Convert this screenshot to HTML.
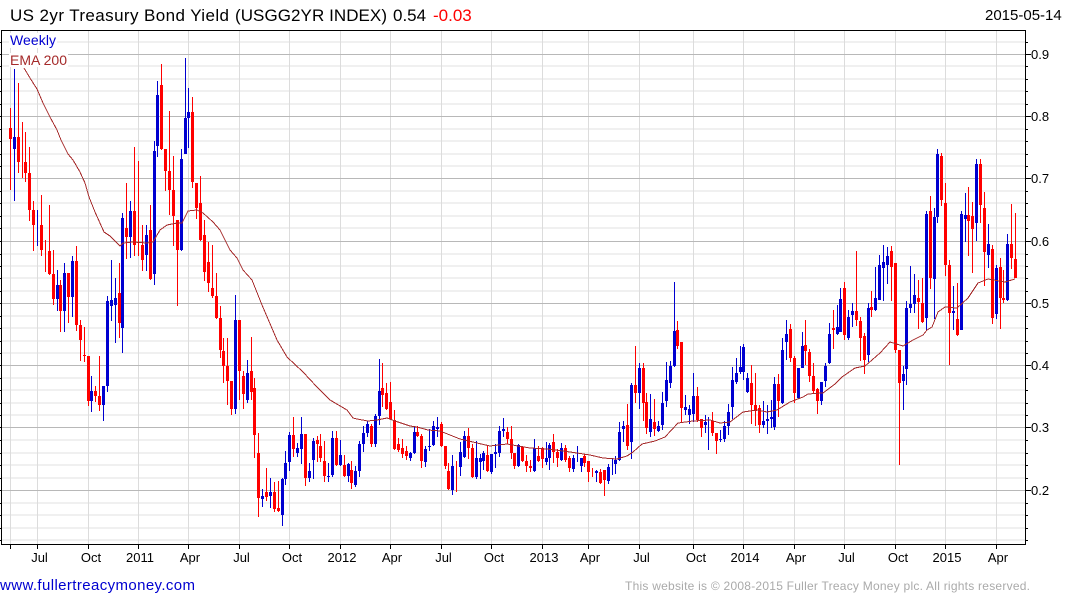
<!DOCTYPE html>
<html><head><meta charset="utf-8"><title>US 2yr Treasury Bond Yield</title>
<style>
html,body{margin:0;padding:0;background:#fff;width:1075px;height:600px;overflow:hidden}
svg{display:block}
text{font-family:"Liberation Sans",Arial,sans-serif}
</style></head><body>
<svg width="1075" height="600" viewBox="0 0 1075 600" xmlns="http://www.w3.org/2000/svg">
<rect width="1075" height="600" fill="#fff"/>
<g shape-rendering="crispEdges" fill="none">
<path stroke="#f0f0f0" stroke-width="2" d="M2 42H1025M2 66H1025M2 79H1025M2 91H1025M2 104H1025M2 129H1025M2 141H1025M2 154H1025M2 166H1025M2 191H1025M2 203H1025M2 216H1025M2 228H1025M2 254H1025M2 266H1025M2 278H1025M2 291H1025M2 316H1025M2 328H1025M2 341H1025M2 353H1025M2 378H1025M2 390H1025M2 403H1025M2 415H1025M2 440H1025M2 453H1025M2 465H1025M2 478H1025M2 503H1025M2 515H1025M2 528H1025M2 540H1025"/>
<path stroke="#dcdcdc" d="M10.5 31V544M37.5 31V544M88.5 31V544M138.5 31V544M188.5 31V544M239.5 31V544M289.5 31V544M340.5 31V544M390.5 31V544M441.5 31V544M491.5 31V544M542.5 31V544M588.5 31V544M639.5 31V544M693.5 31V544M743.5 31V544M794.5 31V544M844.5 31V544M895.5 31V544M945.5 31V544M996.5 31V544"/>
<path stroke="#b8b8b8" d="M2 54.5H1025M2 116.5H1025M2 178.5H1025M2 241.5H1025M2 303.5H1025M2 365.5H1025M2 427.5H1025M2 490.5H1025"/>
<!-- red wicks -->
<path stroke="#ff0000" d="M10.5 108V190M18.5 83V173M22.5 122V178M25.5 132V182M29.5 147V221M33.5 201V251M41.5 195V256M45.5 240V272M49.5 205V275M53.5 250V305M60.5 280V332M68.5 273V323M76.5 246V331M80.5 320V361M84.5 327V362M88.5 356V406M95.5 386V402M99.5 356V411M119.5 263V338M126.5 183V259M134.5 147V256M138.5 161V256M142.5 225V271M150.5 205V280M161.5 64V150M165.5 149V191M169.5 111V215M173.5 156V246M177.5 220V306M192.5 97V188M196.5 183V219M200.5 176V241M204.5 220V281M208.5 242V292M212.5 245V298M216.5 273V319M220.5 306V358M223.5 338V383M227.5 338V405M231.5 381V415M239.5 320V400M243.5 371V409M251.5 337V400M254.5 378V458M258.5 433V517M266.5 468V501M274.5 482V512M278.5 481V512M293.5 417V457M305.5 434V486M317.5 436V462M320.5 434V462M324.5 441V482M336.5 431V466M344.5 455V477M351.5 461V489M371.5 424V447M382.5 363V407M386.5 383V410M390.5 382V419M394.5 410V450M398.5 438V452M402.5 439V458M406.5 446V460M417.5 426V437M421.5 434V468M441.5 422V447M445.5 446V469M448.5 463V490M456.5 461V492M468.5 428V459M472.5 444V478M487.5 446V472M507.5 427V444M511.5 426V459M514.5 453V469M522.5 446V462M526.5 455V472M530.5 460V472M538.5 446V462M542.5 447V468M553.5 434V463M557.5 449V467M565.5 445V462M569.5 456V472M584.5 454V467M588.5 461V482M592.5 468V477M600.5 469V484M604.5 470V496M627.5 404V450M635.5 346V403M643.5 363V421M646.5 393V434M654.5 399V436M677.5 321V349M681.5 342V423M697.5 387V422M701.5 419V437M712.5 412V436M716.5 433V454M751.5 365V424M755.5 373V426M759.5 405V433M778.5 374V417M790.5 324V362M794.5 356V403M805.5 320V365M809.5 349V382M813.5 363V393M817.5 388V414M833.5 310V349M844.5 282V340M856.5 251V326M860.5 317V361M864.5 333V374M871.5 291V317M891.5 246V301M895.5 263V353M899.5 350V465M918.5 280V329M922.5 278V323M930.5 196V289M941.5 153V206M945.5 183V276M949.5 260V365M957.5 283V336M968.5 187V256M972.5 202V273M980.5 159V223M984.5 192V286M992.5 245V324M1000.5 258V329M1003.5 270V303M1011.5 204V269M1015.5 213V278"/>
<!-- blue wicks -->
<path stroke="#0000d0" d="M14.5 69V201M37.5 210V246M57.5 270V311M64.5 263V332M72.5 256V317M91.5 376V412M103.5 386V421M107.5 296V392M111.5 260V321M115.5 278V343M122.5 213V353M130.5 201V258M146.5 225V271M154.5 141V285M157.5 81V157M181.5 149V251M185.5 58V154M188.5 88V148M235.5 295V414M247.5 360V403M262.5 489V507M270.5 478V508M282.5 478V526M285.5 451V485M289.5 432V471M297.5 443V457M301.5 417V464M309.5 463V482M313.5 438V479M328.5 463V482M332.5 431V477M340.5 440V466M348.5 463V482M355.5 466V487M359.5 441V477M363.5 426V452M367.5 421V437M375.5 414V447M379.5 359V425M410.5 452V461M414.5 427V454M425.5 446V467M429.5 429V451M433.5 421V446M437.5 417V437M452.5 455V495M460.5 442V476M464.5 431V458M476.5 441V479M480.5 454V479M483.5 451V470M491.5 454V474M495.5 444V468M499.5 426V457M503.5 418V437M518.5 444V467M534.5 439V472M546.5 442V465M549.5 443V470M561.5 443V461M573.5 455V472M577.5 446V462M581.5 458V472M596.5 470V482M608.5 464V484M612.5 458V475M615.5 456V474M619.5 422V461M623.5 421V442M631.5 383V459M639.5 363V409M650.5 394V437M658.5 421V432M662.5 392V430M666.5 362V407M670.5 361V388M674.5 282V367M685.5 395V415M689.5 405V424M693.5 373V422M705.5 415V433M708.5 417V450M720.5 430V442M724.5 421V442M728.5 404V435M732.5 367V419M736.5 358V384M740.5 346V374M743.5 344V380M747.5 373V393M763.5 401V428M767.5 405V434M771.5 400V428M774.5 377V430M782.5 338V404M786.5 320V360M798.5 368V399M802.5 332V368M821.5 382V405M825.5 363V387M829.5 323V364M837.5 305V335M840.5 288V332M848.5 310V340M852.5 303V327M868.5 303V362M875.5 267V311M879.5 255V300M883.5 245V301M887.5 247V284M903.5 366V410M906.5 301V385M910.5 266V313M914.5 274V313M926.5 211V330M934.5 208V319M937.5 149V223M953.5 286V330M961.5 211V330M965.5 193V242M976.5 159V241M988.5 224V268M996.5 265V319M1007.5 234V301"/>
<!-- red bodies -->
<path stroke="#ff0000" stroke-width="3" d="M10.5 128V139M18.5 137V162M25.5 162V173M29.5 173V210M33.5 210V225M41.5 225V250M49.5 251V274M53.5 274V299M60.5 285V311M68.5 273V297M76.5 261V325M80.5 325V340M84.5 355V356M88.5 356V401M95.5 391V396M99.5 396V405M119.5 293V323M126.5 228V237M134.5 211V245M142.5 245V260M150.5 230V279M161.5 85V149M165.5 149V171M169.5 171V190M173.5 190V216M177.5 220V250M192.5 112V182M196.5 183V208M200.5 203V240M204.5 235V272M208.5 262V283M212.5 288V296M216.5 296V318M220.5 318V350M223.5 351V366M227.5 366V381M231.5 381V409M239.5 320V371M243.5 376V394M251.5 371V392M254.5 388V435M258.5 453V498M266.5 492V497M274.5 492V509M278.5 508V511M293.5 435V449M305.5 434V478M317.5 440V444M320.5 446V458M324.5 461V476M336.5 438V465M344.5 465V476M351.5 470V483M371.5 426V444M382.5 388V395M386.5 393V409M390.5 402V419M394.5 420V449M398.5 444V450M402.5 448V454M406.5 451V456M417.5 432V436M421.5 436V461M441.5 424V446M445.5 446V466M448.5 471V489M468.5 436V448M472.5 448V477M487.5 455V471M507.5 432V439M511.5 439V453M514.5 453V466M522.5 447V461M526.5 461V466M530.5 466V468M538.5 456V461M542.5 448V459M553.5 442V452M557.5 452V458M565.5 448V460M569.5 458V468M584.5 456V463M588.5 461V472M600.5 472V483M604.5 470V480M627.5 425V446M635.5 385V393M643.5 368V403M646.5 402V428M654.5 422V429M677.5 330V346M681.5 342V408M697.5 396V420M701.5 419V428M712.5 421V433M716.5 433V441M751.5 383V405M755.5 405V411M759.5 408V425M778.5 384V401M790.5 329V358M794.5 358V393M805.5 345V351M809.5 352V376M813.5 376V391M817.5 389V401M833.5 328V330M844.5 288V335M856.5 311V320M860.5 321V338M864.5 336V360M871.5 307V310M891.5 251V267M895.5 263V350M899.5 350V383M918.5 298V302M922.5 303V322M930.5 211V278M941.5 156V200M945.5 203V265M949.5 265V313M957.5 319V335M968.5 215V221M972.5 216V229M980.5 164V205M984.5 208V252M992.5 249V318M1000.5 267V298M1003.5 298V300M1011.5 244V258M1015.5 259V278"/>
<!-- blue bodies -->
<path stroke="#0000d0" stroke-width="3" d="M14.5 137V149M57.5 285V299M64.5 273V311M72.5 261V297M91.5 391V401M103.5 386V405M107.5 301V386M111.5 300V306M115.5 298V305M122.5 218V328M130.5 211V237M146.5 235V255M154.5 151V274M157.5 95V146M181.5 159V250M185.5 118V154M188.5 112V118M235.5 320V409M247.5 373V400M262.5 496V499M270.5 492V496M282.5 479V515M285.5 463V479M289.5 435V462M297.5 448V453M301.5 434V449M309.5 471V478M313.5 441V460M328.5 476V477M332.5 438V475M340.5 455V465M348.5 464V476M355.5 471V485M359.5 444V471M363.5 433V444M367.5 424V433M375.5 416V444M379.5 391V416M410.5 453V458M414.5 432V453M425.5 449V462M429.5 446V447M433.5 426V445M437.5 427V429M452.5 466V490M460.5 452V467M464.5 436V457M476.5 458V477M480.5 458V462M483.5 453V461M491.5 454V472M495.5 452V454M499.5 431V453M503.5 429V431M518.5 445V466M534.5 448V471M546.5 458V462M549.5 445V458M561.5 448V460M573.5 458V469M581.5 458V466M596.5 471V473M608.5 467V481M615.5 460V464M619.5 432V460M623.5 426V429M631.5 385V442M639.5 368V393M650.5 419V432M658.5 426V431M662.5 403V425M666.5 380V401M670.5 366V383M674.5 331V366M685.5 407V410M689.5 409V415M693.5 396V414M705.5 422V425M720.5 439V440M724.5 426V439M728.5 412V426M732.5 380V407M736.5 373V382M740.5 367V372M743.5 347V372M747.5 378V392M763.5 421V425M767.5 419V421M771.5 417V419M774.5 384V427M782.5 350V403M786.5 334V342M798.5 368V398M802.5 346V368M821.5 382V401M825.5 366V381M829.5 334V363M837.5 327V334M840.5 299V332M848.5 317V338M852.5 311V315M868.5 308V355M875.5 298V310M879.5 265V300M883.5 262V268M887.5 256V265M903.5 374V381M906.5 308V369M910.5 304V308M914.5 295V304M926.5 214V318M934.5 217V279M937.5 154V217M953.5 311V313M961.5 214V330M965.5 215V219M976.5 164V223M988.5 244V255M996.5 268V314M1007.5 244V300"/>
</g>
<!-- EMA -->
<polyline fill="none" stroke="#a52a2a" stroke-width="1" shape-rendering="crispEdges" points="24,68 30,78 37,89 43,103 50,117 57,130 61,140 68,154 73,160 80,172 85,183 89,197 95,212 104,232 110,236 120,246 123,243 133,242 147,243 153,242 160,230 167,225 177,223 182,223 188,211 197,210 203,213 213,222 220,230 230,250 237,258 243,270 252,280 262,305 277,340 287,357 303,372 317,387 330,400 347,410 353,418 357,419 368,421 377,420 387,418 395,421 410,426 417,427 428,430 440,431 450,435 460,439 477,443 490,446 507,444 518,446 530,448 547,449 563,451 577,453 590,455 603,458 617,459 627,456 633,452 642,444 655,441 665,437 678,423 693,421 710,420 720,423 730,422 743,412 757,410 767,412 777,410 790,402 803,397 808,394 823,393 835,384 842,377 855,368 865,366 872,360 880,353 890,342 903,346 913,340 923,335 927,330 932,327 938,312 945,307 957,308 968,298 978,283 988,279 1005,282 1015,279"/>
<!-- frame and ticks -->
<g shape-rendering="crispEdges" fill="none" stroke="#000">
<path d="M1.5 30.5H1025.5V544.5H1.5Z"/>
<path d="M1026 42.5h2M1026 54.5h5M1026 66.5h2M1026 79.5h2M1026 91.5h2M1026 104.5h2M1026 116.5h5M1026 129.5h2M1026 141.5h2M1026 154.5h2M1026 166.5h2M1026 178.5h5M1026 191.5h2M1026 203.5h2M1026 216.5h2M1026 228.5h2M1026 241.5h5M1026 254.5h2M1026 266.5h2M1026 278.5h2M1026 291.5h2M1026 303.5h5M1026 316.5h2M1026 328.5h2M1026 341.5h2M1026 353.5h2M1026 365.5h5M1026 378.5h2M1026 390.5h2M1026 403.5h2M1026 415.5h2M1026 427.5h5M1026 440.5h2M1026 453.5h2M1026 465.5h2M1026 478.5h2M1026 490.5h5M1026 503.5h2M1026 515.5h2M1026 528.5h2M1026 540.5h2"/>
<path d="M0 42.5h1M0 54.5h1M0 66.5h1M0 79.5h1M0 91.5h1M0 104.5h1M0 116.5h1M0 129.5h1M0 141.5h1M0 154.5h1M0 166.5h1M0 178.5h1M0 191.5h1M0 203.5h1M0 216.5h1M0 228.5h1M0 241.5h1M0 254.5h1M0 266.5h1M0 278.5h1M0 291.5h1M0 303.5h1M0 316.5h1M0 328.5h1M0 341.5h1M0 353.5h1M0 365.5h1M0 378.5h1M0 390.5h1M0 403.5h1M0 415.5h1M0 427.5h1M0 440.5h1M0 453.5h1M0 465.5h1M0 478.5h1M0 490.5h1M0 503.5h1M0 515.5h1M0 528.5h1M0 540.5h1"/>
<path d="M10.5 545v4M37.5 545v4M88.5 545v4M138.5 545v4M188.5 545v4M239.5 545v4M289.5 545v4M340.5 545v4M390.5 545v4M441.5 545v4M491.5 545v4M542.5 545v4M588.5 545v4M639.5 545v4M693.5 545v4M743.5 545v4M794.5 545v4M844.5 545v4M895.5 545v4M945.5 545v4M996.5 545v4"/>
</g>
<!-- legend -->
<rect x="9" y="33" width="48" height="15" fill="#fff"/>
<rect x="9" y="53" width="59" height="14" fill="#fff"/>
<text x="10" y="45" font-size="14" fill="#0000d0" textLength="46" lengthAdjust="spacing">Weekly</text>
<text x="10" y="65" font-size="14" fill="#a52a2a" textLength="57" lengthAdjust="spacing">EMA 200</text>
<!-- title -->
<text x="10" y="21" font-size="17" fill="#000" textLength="219" lengthAdjust="spacing">US 2yr Treasury Bond Yield</text>
<text x="235" y="21" font-size="17" fill="#000" textLength="152" lengthAdjust="spacing">(USGG2YR INDEX)</text>
<text x="393" y="21" font-size="17" fill="#000">0.54</text>
<text x="433" y="21" font-size="17" fill="#ff0000">-0.03</text>
<text x="985" y="20" font-size="15" fill="#000">2015-05-14</text>
<!-- y labels -->
<g font-size="13" fill="#000">
<text x="1031" y="59">0.9</text><text x="1031" y="121">0.8</text><text x="1031" y="183">0.7</text><text x="1031" y="246">0.6</text><text x="1031" y="308">0.5</text><text x="1031" y="370">0.4</text><text x="1031" y="432">0.3</text><text x="1031" y="495">0.2</text>
</g>
<!-- x labels -->
<g font-size="13" fill="#000" text-anchor="middle">
<text x="39.5" y="562">Jul</text><text x="91" y="562">Oct</text><text x="140" y="562">2011</text><text x="190" y="562">Apr</text><text x="241.5" y="562">Jul</text><text x="292" y="562">Oct</text><text x="342" y="562">2012</text><text x="392" y="562">Apr</text><text x="443.5" y="562">Jul</text><text x="494" y="562">Oct</text><text x="544" y="562">2013</text><text x="590" y="562">Apr</text><text x="641.5" y="562">Jul</text><text x="696" y="562">Oct</text><text x="745" y="562">2014</text><text x="796" y="562">Apr</text><text x="846.5" y="562">Jul</text><text x="898" y="562">Oct</text><text x="947" y="562">2015</text><text x="998" y="562">Apr</text>
</g>
<!-- footer -->
<text x="0" y="590" font-size="15" fill="#0000d0" textLength="195" lengthAdjust="spacing">www.fullertreacymoney.com</text>
<text x="625" y="590" font-size="12" fill="#aaaaaa" textLength="405" lengthAdjust="spacing">This website is © 2008-2015 Fuller Treacy Money plc. All rights reserved.</text>
</svg>
</body></html>
